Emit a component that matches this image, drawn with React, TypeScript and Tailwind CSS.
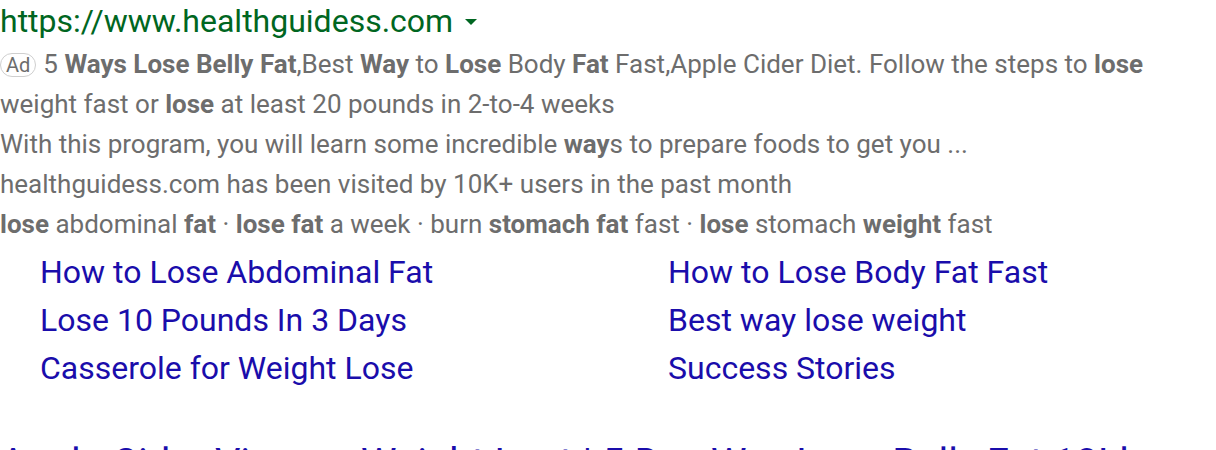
const links = [
  ["How to Lose Abdominal Fat", "How to Lose Body Fat Fast"],
  ["Lose 10 Pounds In 3 Days", "Best way lose weight"],
  ["Casserole for Weight Lose", "Success Stories"],
];

export default function App() {
  return (
    <div className="h-[450px] w-[1216px] overflow-hidden bg-white font-['Roboto',sans-serif]">
      {/* display url */}
      <div className="flex h-[42px] items-center text-[32px] leading-[42px] text-[#006621]">
        <span>https://www.healthguidess.com</span>
        <span className="ml-[12px] mt-[1px] h-0 w-0 border-x-[6px] border-t-[6px] border-x-transparent border-t-[#006621]" />
      </div>

      {/* ad copy */}
      <div className="mt-[2px] text-[26px] leading-[40px] text-[#6d6d6d]">
        <p>
          <span className="mr-[7px] inline-block rounded-[12px] border border-[#cfcfcf] px-[5px] align-[1px] text-[20px] leading-[22px]">
            Ad
          </span>
          5 <b>Ways Lose Belly Fat</b>,Best <b>Way</b> to <b>Lose</b> Body <b>Fat</b> Fast,Apple Cider Diet. Follow the steps to{" "}
          <b>lose</b> weight fast or <b>lose</b> at least 20 pounds in 2-to-4 weeks
        </p>
        <p>
          With this program, you will learn some incredible <b>way</b>s to prepare foods to get you ...
        </p>
        <p>healthguidess.com has been visited by 10K+ users in the past month</p>
        <p>
          <b>lose</b> abdominal <b>fat</b> · <b>lose fat</b> a week · burn <b>stomach fat</b> fast · <b>lose</b> stomach{" "}
          <b>weight</b> fast
        </p>
      </div>

      {/* sitelinks */}
      <div className="mt-[4px] grid grid-cols-[628px_1fr] pl-[40px] text-[32px] leading-[48px] text-[#1a0dab]">
        {links.map(([a, b]) => (
          <div key={a} className="contents">
            <a href="#">{a}</a>
            <a href="#">{b}</a>
          </div>
        ))}
      </div>

      {/* next result title, cut off by the viewport */}
      <div className="mt-[48px] whitespace-nowrap text-[40px] leading-[48px] text-[#1a0dab]">
        Apple Cider Vinegar Weight Lost | 5 Day Way Lose Belly Fat 10Lbs
      </div>
    </div>
  );
}
